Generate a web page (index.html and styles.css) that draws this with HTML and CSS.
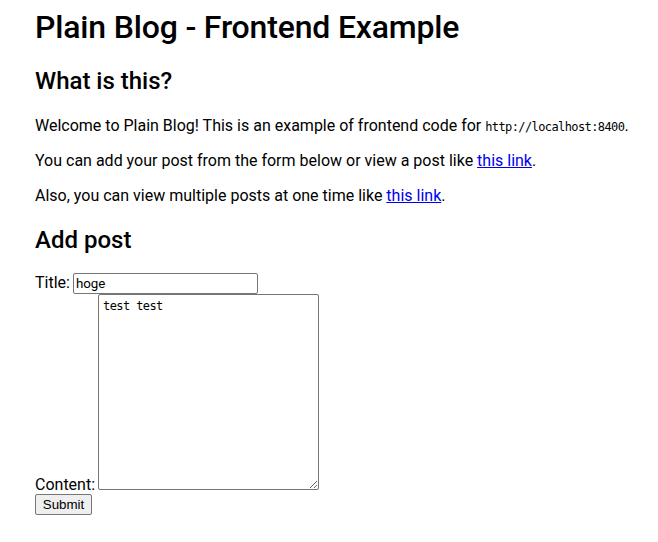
FILE: index.html
```html
<!DOCTYPE html>
<html>
<head>
<meta charset="utf-8">
<title>Plain Blog</title>
<link rel="stylesheet" href="styles.css">
</head>
<body>
<main class="page">
  <h1 class="title">Plain Blog - Frontend Example</h1>
  <h2 class="section">What is this?</h2>
  <p class="text">Welcome to Plain Blog! This is an example of frontend code for <code class="code">http://localhost:8400</code>.</p>
  <p class="text">You can add your post from the form below or view a post like <a href="#" class="link">this link</a>.</p>
  <p class="text">Also, you can view multiple posts at one time like <a href="#" class="link">this link</a>.</p>
  <h2 class="section section-form">Add post</h2>
  <form class="post-form">
    <label class="label">Title: <input type="text" class="title-input" value="hoge"></label><br>
    <label class="label">Content: <textarea class="content-input">test test</textarea></label><br>
    <button type="button" class="submit">Submit</button>
  </form>
</main>
</body>
</html>
```
FILE: styles.css
```css
html, body {
  margin: 0;
  padding: 0;
  background: #fff;
}
.page {
  padding: 8px 8px 0 35px;
  font-family: Roboto, sans-serif;
  font-size: 16px;
  color: #000;
}
.title {
  font-size: 32px;
  font-weight: 500;
  letter-spacing: -0.18px;
  margin: 0 0 21.44px 0;
}
.section {
  font-size: 24px;
  font-weight: 500;
  margin: 21px 0;
}
.section-form {
  margin-bottom: 19px;
}
.text {
  margin: 16px 0;
}
.code {
  font-family: "DejaVu Sans Mono", monospace;
  font-size: 12px;
  letter-spacing: -0.6px;
}
.link {
  color: #0000ee;
}
.post-form {
  margin: 0;
}
.title-input {
  box-sizing: border-box;
  width: 185px;
  height: 21px;
  font-family: Roboto, sans-serif;
  font-size: 13.33px;
  padding: 1px 2px;
  border: 1px solid #767676;
  border-radius: 2px;
  margin: 0 0 0 -1px;
}
.content-input {
  box-sizing: border-box;
  width: 221px;
  height: 196px;
  font-family: "DejaVu Sans Mono", monospace;
  font-size: 12px;
  letter-spacing: -0.6px;
  padding: 4px 4px;
  border: 1px solid #767676;
  border-radius: 2px;
  margin: 0 0 0 -1px;
  vertical-align: baseline;
  resize: both;
}
.submit {
  box-sizing: border-box;
  width: 57px;
  height: 21px;
  font-family: "Liberation Sans", Arial, sans-serif;
  font-size: 13.33px;
  padding: 1px 6px;
  border: 1px solid #767676;
  border-radius: 2px;
  background: #efefef;
  color: #000;
  margin: 0;
}
```
